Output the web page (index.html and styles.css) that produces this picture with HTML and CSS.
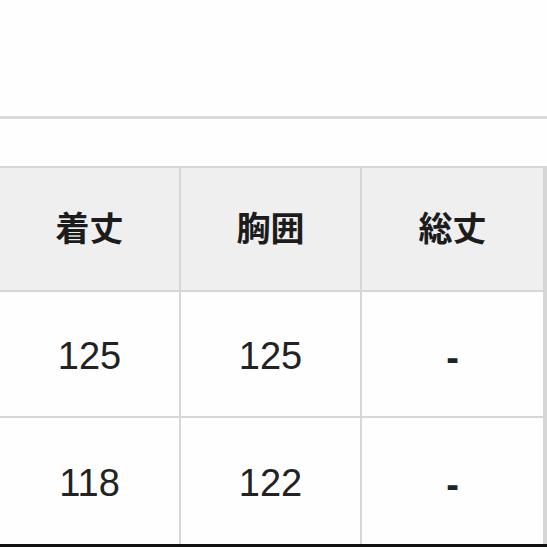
FILE: index.html
```html
<!DOCTYPE html>
<html lang="ja">
<head>
<meta charset="utf-8">
<link rel="stylesheet" href="styles.css">
</head>
<body>
<div class="page">
  <div class="top"></div>
  <div class="spacer"></div>
  <div class="table">
    <div class="cell head">着丈</div>
    <div class="cell head">胸囲</div>
    <div class="cell head">総丈</div>
    <div class="cell num">125</div>
    <div class="cell num">125</div>
    <div class="cell num dash">-</div>
    <div class="cell num">118</div>
    <div class="cell num">122</div>
    <div class="cell num dash">-</div>
  </div>
  <div class="bottom"></div>
</div>
</body>
</html>
```

FILE: styles.css
```css
html, body {
  margin: 0;
  padding: 0;
  background: #ffffff;
}
.page {
  width: 547px;
  height: 547px;
  overflow: hidden;
  display: flex;
  flex-direction: column;
  background: #fefefe;
}
.top {
  height: 116px;
  border-bottom: 3px solid #dadada;
  flex: none;
}
.spacer {
  height: 47px;
  flex: none;
}
.table {
  flex: none;
  width: 545px;
  display: grid;
  grid-template-columns: 179px 179px 181px;
  grid-template-rows: 122px 124px 126px;
  gap: 2px;
  padding: 2px 2px 0 0;
  background: #d6d6d6;
}
.cell {
  display: flex;
  align-items: center;
  justify-content: center;
  background: #fefefe;
  color: #222;
}
.head {
  background: #efefef;
  font-family: "Noto Sans CJK JP", sans-serif;
  font-weight: 700;
  font-size: 34px;
  color: #1c1c1c;
  padding-bottom: 5px;
}
.num {
  font-family: "Liberation Sans", Arial, sans-serif;
  font-size: 38px;
  padding-top: 4px;
}
.dash {
  font-weight: 700;
  padding-top: 8px;
}
.bottom {
  flex: 1;
  background: #111;
}
```
